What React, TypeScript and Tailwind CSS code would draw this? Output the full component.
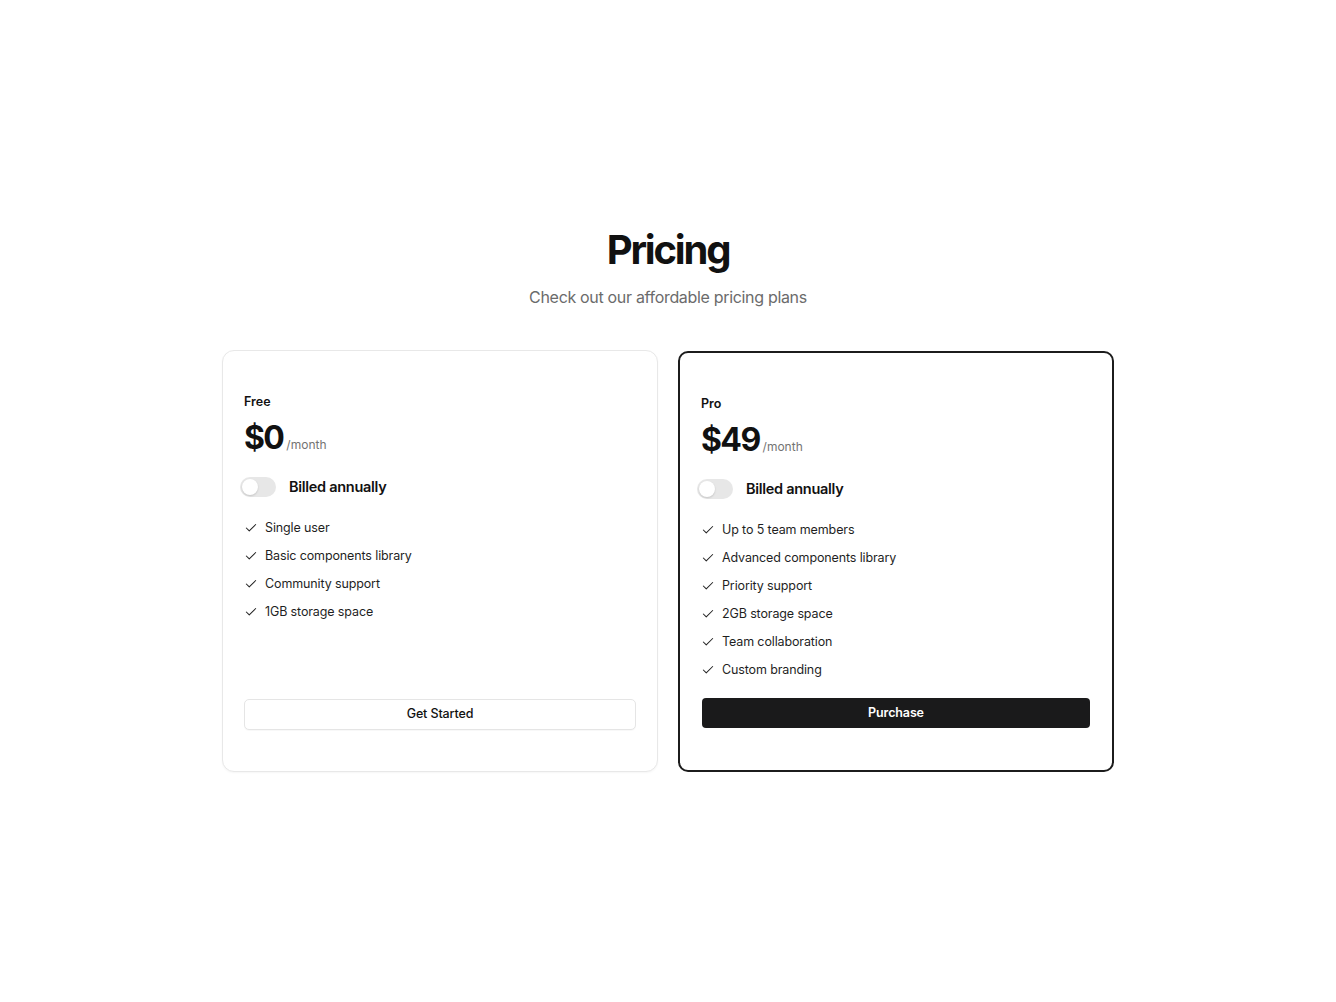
import { Check } from "lucide-react";

type Plan = {
  name: string;
  price: string;
  features: string[];
  cta: string;
  featured?: boolean;
};

const plans: Plan[] = [
  {
    name: "Free",
    price: "$0",
    features: [
      "Single user",
      "Basic components library",
      "Community support",
      "1GB storage space",
    ],
    cta: "Get Started",
  },
  {
    name: "Pro",
    price: "$49",
    features: [
      "Up to 5 team members",
      "Advanced components library",
      "Priority support",
      "2GB storage space",
      "Team collaboration",
      "Custom branding",
    ],
    cta: "Purchase",
    featured: true,
  },
];

const Toggle = () => (
  <button
    type="button"
    className="-ml-1 flex h-5 w-9 shrink-0 items-center rounded-full bg-[#e7e7e7] p-[2px]"
  >
    <span className="h-4 w-4 rounded-full bg-white shadow-[0_1px_2px_rgba(0,0,0,0.15)]" />
  </button>
);

const PlanCard = ({ plan }: { plan: Plan }) => {
  const { featured } = plan;
  return (
    <div
      className={
        featured
          ? "flex flex-col rounded-[10px] border-2 border-[#1c1c1c] bg-white pb-[42px] pl-[21px] pr-[21px] pt-[41px]"
          : "flex h-[422px] flex-col rounded-[12px] border border-[#e8e8e8] bg-white px-[21px] pb-[41px] pt-[41px] shadow-[0_1px_2px_rgba(0,0,0,0.04)]"
      }
    >
      <div className="text-[12.5px] font-semibold leading-5 text-[#111]">
        {plan.name}
      </div>
      <div className="mt-[6px] flex h-10 items-baseline gap-[3px]">
        <span className="text-[32px] font-bold leading-10 tracking-[-0.05em] text-[#111]">
          {plan.price}
        </span>
        <span className="text-[12px] text-[#737373]">/month</span>
      </div>
      <div className="mt-[19px] flex h-5 items-center gap-[13px]">
        <Toggle />
        <span className="text-[14.5px] font-semibold tracking-[-0.02em] text-[#111]">
          Billed annually
        </span>
      </div>
      <ul className="mt-[21px] flex flex-col gap-2">
        {plan.features.map((f) => (
          <li
            key={f}
            className="flex h-5 items-center gap-[7px] text-[12.5px] tracking-[-0.01em] text-[#1f1f1f]"
          >
            <Check size={14} strokeWidth={1.75} className="text-[#222]" />
            {f}
          </li>
        ))}
      </ul>
      {featured ? (
        <button
          type="button"
          className="ml-px mr-px mt-[18px] h-[30px] rounded-[4px] bg-[#1a1a1b] text-[12.5px] font-semibold tracking-[-0.01em] text-white"
        >
          {plan.cta}
        </button>
      ) : (
        <button
          type="button"
          className="mt-auto h-[31px] w-full rounded-[5px] border border-[#e5e5e5] bg-white text-[12.5px] font-medium tracking-[-0.01em] text-[#111] shadow-[0_1px_1px_rgba(0,0,0,0.03)]"
        >
          {plan.cta}
        </button>
      )}
    </div>
  );
};

export default function App() {
  return (
    <div
      className="flex min-h-screen flex-col items-center bg-white pt-[226px]"
      style={{ fontFamily: "Inter, 'Noto Sans', sans-serif" }}
    >
      <h1 className="text-[40px] font-bold leading-[48px] tracking-[-0.055em] text-[#111]">
        Pricing
      </h1>
      <p className="mt-[11px] text-[16px] leading-6 tracking-[-0.02em] text-[#6b6b6b]">
        Check out our affordable pricing plans
      </p>
      <div className="mt-[41px] grid w-[892px] grid-cols-2 items-end gap-5">
        {plans.map((p) => (
          <PlanCard key={p.name} plan={p} />
        ))}
      </div>
    </div>
  );
}
